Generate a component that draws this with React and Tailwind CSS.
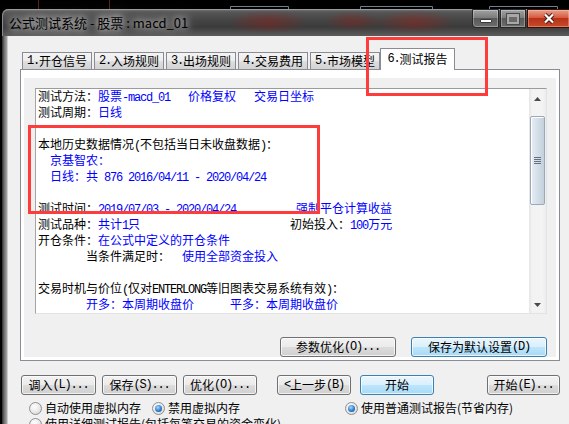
import React from "react";

function Mx({ text }) {
  const parts = text.split(/([\x20-\x7e]+)/).filter((p) => p.length);
  return (
    <>
      {parts.map((p, i) =>
        /^[\x20-\x7e]+$/.test(p) ? (
          <span key={i} className="font-['Liberation_Mono',monospace] text-[12px] tracking-[-1.2px]">
            {p}
          </span>
        ) : (
          <span key={i}>{p}</span>
        )
      )}
    </>
  );
}

function Btn({ label, w, blue }) {
  return (
    <div
      className={`${w} h-[20px] shrink-0 rounded-[3px] border flex items-center justify-center whitespace-pre text-[12px] leading-[14px] text-black shadow-[inset_0_0_0_1px_rgba(255,255,255,0.7)] ${
        blue
          ? "border-[#3c7fb1] bg-[linear-gradient(180deg,#eaf6fd_0%,#d9f0fc_50%,#bee6fd_50%,#a7d9f5_100%)]"
          : "border-[#707070] bg-[linear-gradient(180deg,#f2f2f2_0%,#ebebeb_50%,#dddddd_50%,#cfcfcf_100%)]"
      }`}
    >
      <Mx text={label} />
    </div>
  );
}

function Radio({ on }) {
  return (
    <span className="w-[13px] h-[13px] shrink-0 rounded-full border border-[#8f8f8f] bg-[radial-gradient(circle_at_40%_35%,#ffffff,#e8e8e8_55%,#cdcdcd)] flex items-center justify-center">
      {on && (
        <span className="w-[7px] h-[7px] rounded-full bg-[radial-gradient(circle_at_40%_35%,#a8d8ff,#2f80d2_55%,#0c3c78)]" />
      )}
    </span>
  );
}

const lines = [
  [["k", "测试方法："], ["b", "股票-macd_01   价格复权   交易日坐标"]],
  [["k", "测试周期："], ["b", "日线"]],
  [],
  [["k", "本地历史数据情况(不包括当日未收盘数据)："]],
  [["b", "  京基智农："]],
  [["b", "  日线：共 876 2016/04/11 - 2020/04/24"]],
  [],
  [["k", "测试时间："], ["b", "2019/07/03 - 2020/04/24          强制平仓计算收益"]],
  [["k", "测试品种："], ["b", "共计1只"], ["k", "                         初始投入："], ["b", "100万元"]],
  [["k", "开仓条件："], ["b", "在公式中定义的开仓条件"]],
  [["k", "        当条件满足时：  "], ["b", "使用全部资金投入"]],
  [],
  [["k", "交易时机与价位(仅对ENTERLONG等旧图表交易系统有效)："]],
  [["b", "        开多：本周期收盘价      平多：本周期收盘价"]],
  [["b", "        开空：本周期收盘价      平空：本周期收盘价"]],
];

const tabs = ["1.开仓信号", "2.入场规则", "3.出场规则", "4.交易费用", "5.市场模型"];

function ArrowUp() {
  return (
    <svg width="7" height="4" viewBox="0 0 7 4">
      <path d="M3.5 0 L7 4 L0 4 Z" fill="#4a4a4a" />
    </svg>
  );
}
function ArrowDown() {
  return (
    <svg width="7" height="4" viewBox="0 0 7 4">
      <path d="M0 0 L7 0 L3.5 4 Z" fill="#4a4a4a" />
    </svg>
  );
}

export default function App() {
  return (
    <div className="relative w-[569px] h-[424px] overflow-hidden bg-black font-['Noto_Sans_CJK_SC','Noto_Sans',sans-serif] text-[12px] text-black">
      {/* chart background strip above the window */}
      <svg width="569" height="9" className="block">
        <g stroke="#5a2418" strokeWidth="1">
          <line x1="38.5" y1="0" x2="38.5" y2="9" />
          <line x1="109.5" y1="0" x2="109.5" y2="9" />
        </g>
        <g stroke="#6f7f92" strokeWidth="1" fill="none">
          <path d="M230.5 9 V6.5 H288.5 V9" />
          <path d="M360.5 9 V6.5 H432.5 V9" />
          <path d="M489.5 9 V6.5 H557.5 V9" />
        </g>
      </svg>

      {/* window */}
      <div className="ml-[2px] w-[568px] flex flex-col">
        {/* title bar */}
        <div className="h-[27px] flex rounded-tl-[6px] border-l border-[#8a8a8a] shadow-[inset_0_1px_0_#9a9a9a] bg-[radial-gradient(ellipse_40px_12px_at_265px_13px,rgba(140,30,25,0.5),transparent),radial-gradient(ellipse_28px_10px_at_350px_12px,rgba(140,30,25,0.45),transparent),radial-gradient(ellipse_40px_12px_at_412px_13px,rgba(150,35,25,0.5),transparent),linear-gradient(180deg,#7c7c7c_0px,#565656_3px,#434343_12px,#3b3b3b_18px,#5c5c5c_27px)]">
          <div className="flex-1 pl-[6px] pt-[5px] leading-[17px] text-[13px] text-black whitespace-pre [text-shadow:0_0_6px_rgba(255,255,255,0.75),0_0_10px_rgba(255,255,255,0.6),0_0_16px_rgba(255,255,255,0.5)]">
            公式测试系统 - 股票 : macd_01
          </div>
          <div className="flex gap-[1px] items-start">
            <div className="w-[27px] h-[19px] rounded-bl-[4px] border border-[#262626] shadow-[inset_0_0_0_1px_rgba(255,255,255,0.3)] bg-[linear-gradient(180deg,#a2a2a2_0%,#7c7c7c_45%,#5a5a5a_50%,#6c6c6c_100%)] flex items-end justify-center pb-[4px]">
              <div className="w-[12px] h-[4px] bg-white border border-[#3a3a3a] rounded-[1px]" />
            </div>
            <div className="w-[26px] h-[19px] border border-[#262626] shadow-[inset_0_0_0_1px_rgba(255,255,255,0.3)] bg-[linear-gradient(180deg,#a2a2a2_0%,#7c7c7c_45%,#5a5a5a_50%,#6c6c6c_100%)] flex items-center justify-center">
              <div className="w-[12px] h-[10px] border-[2px] border-t-[3px] border-[#a8a8a8] bg-[#6a6a6a] shadow-[0_0_0_1px_#4a4a4a]" />
            </div>
            <div className="w-[43px] h-[19px] border border-[#3a1008] shadow-[inset_0_0_0_1px_rgba(255,220,200,0.35)] bg-[linear-gradient(180deg,#e7a08d_0%,#d75a3e_45%,#b83218_50%,#c94a2c_100%)] flex items-center justify-center">
              <svg width="12" height="11" viewBox="0 0 12 11">
                <path d="M2 1.5 L10 9.5 M10 1.5 L2 9.5" stroke="#4a1a10" strokeWidth="4" />
                <path d="M2 1.5 L10 9.5 M10 1.5 L2 9.5" stroke="#ffffff" strokeWidth="2.2" />
              </svg>
            </div>
          </div>
        </div>

        {/* body */}
        <div className="flex h-[388px]">
          <div className="w-[6px] bg-[linear-gradient(90deg,#2a2a2a,#6c6c6c_35%,#9c9c9c_75%,#e0e0e0)]" />
          <div className="flex-1 bg-[#f0f0f0] flex flex-col">
            {/* tabs */}
            <div className="flex items-end h-[22px] ml-[14px] mt-[12px] gap-[2px]">
              {tabs.map((t) => (
                <div
                  key={t}
                  className="w-[70px] h-[17px] mb-[1px] border border-b-0 border-[#898c95] bg-[linear-gradient(180deg,#f4f4f4_0%,#ececec_50%,#dfdfdf_50%,#d3d3d3_100%)] flex items-center justify-center whitespace-pre text-[12px] leading-[14px]"
                >
                  <Mx text={t} />
                </div>
              ))}
              <div className="relative z-10 -ml-[2px] w-[75px] h-[22px] border border-b-0 border-[#898c95] bg-white flex items-center justify-center pb-[2px] whitespace-pre text-[12px] leading-[14px]">
                <Mx text="6.测试报告" />
              </div>
            </div>

            {/* tab panel */}
            <div className="-mt-px ml-[12px] w-[540px] h-[295px] border border-[#898c95] bg-white pt-[8px] px-[3px] pb-[3px] flex flex-col">
              <div className="flex-1 bg-[#f0f0f0] flex flex-col">
                {/* report box */}
                <div className="ml-[11px] mt-[10px] w-[512px] h-[226px] flex border border-t-[#9b9b9b] border-l-[#a5a5a5] border-r-[#e3e3e3] border-b-[#e3e3e3] bg-white">
                  <div className="flex-1 overflow-hidden pl-[2px]">
                    <div className="-mt-px">
                      {lines.map((segs, i) => (
                        <div key={i} className="h-[16px] leading-[16px] whitespace-pre">
                          {segs.map(([c, t], j) => (
                            <span key={j} className={c === "b" ? "text-[#0000ff]" : "text-black"}>
                              <Mx text={t} />
                            </span>
                          ))}
                        </div>
                      ))}
                    </div>
                  </div>
                  {/* scrollbar */}
                  <div className="w-[17px] flex flex-col bg-[linear-gradient(90deg,#e6e6e6,#f3f3f3_20%,#f3f3f3_80%,#ececec)]">
                    <div className="h-[20px] flex items-center justify-center">
                      <ArrowUp />
                    </div>
                    <div className="mt-[7px] mx-[1px] h-[89px] rounded-[2px] border border-[#98a9b9] shadow-[inset_1px_1px_0_#ffffff] bg-[linear-gradient(90deg,#e8eef4_0%,#d6e0e9_45%,#c3d1dd_100%)] flex flex-col items-center justify-center gap-[1px]">
                      <div className="w-[7px] h-[1px] bg-[#5f7182]" />
                      <div className="w-[7px] h-[1px] bg-[#5f7182]" />
                      <div className="w-[7px] h-[1px] bg-[#5f7182]" />
                      <div className="w-[7px] h-[1px] bg-[#5f7182]" />
                    </div>
                    <div className="flex-1" />
                    <div className="h-[17px] flex items-center justify-center">
                      <ArrowDown />
                    </div>
                  </div>
                </div>

                {/* panel buttons */}
                <div className="mt-[23px] flex justify-end gap-[15px] pr-[9px]">
                  <Btn w="w-[116px]" label="参数优化(O)..." />
                  <Btn w="w-[136px]" label="保存为默认设置(D)" blue />
                </div>
              </div>
            </div>

            {/* bottom buttons */}
            <div className="mt-[14px] ml-[13px] flex">
              <Btn w="w-[75px]" label="调入(L)..." />
              <div className="ml-[6px]">
                <Btn w="w-[75px]" label="保存(S)..." />
              </div>
              <div className="ml-[6px]">
                <Btn w="w-[74px]" label="优化(O)..." />
              </div>
              <div className="ml-[20px]">
                <Btn w="w-[74px]" label="<上一步(B)" />
              </div>
              <div className="ml-[9px]">
                <Btn w="w-[74px]" label="开始" blue />
              </div>
              <div className="ml-[53px]">
                <Btn w="w-[73px]" label="开始(E)..." />
              </div>
            </div>

            {/* radios */}
            <div className="mt-[5px] h-[16px] ml-[21px] flex items-center leading-[16px] whitespace-pre">
              <Radio />
              <span className="ml-[3px]">自动使用虚拟内存</span>
              <span className="ml-[11px]">
                <Radio on />
              </span>
              <span className="ml-[3px]">禁用虚拟内存</span>
              <span className="ml-[105px]">
                <Radio on />
              </span>
              <span className="ml-[3px]">使用普通测试报告(节省内存)</span>
            </div>
            <div className="h-[16px] ml-[21px] flex items-center leading-[16px] whitespace-pre">
              <Radio />
              <span className="ml-[3px]">使用详细测试报告(包括每笔交易的资金变化)</span>
            </div>
          </div>
        </div>
      </div>

      {/* red annotation rectangles */}
      <div className="absolute left-[366px] top-[37px] w-[122px] h-[59px] border-[3px] border-[#ff3c3c]" />
      <div className="absolute left-[28px] top-[125px] w-[292px] h-[89px] border-[3px] border-[#ff3c3c]" />
    </div>
  );
}
